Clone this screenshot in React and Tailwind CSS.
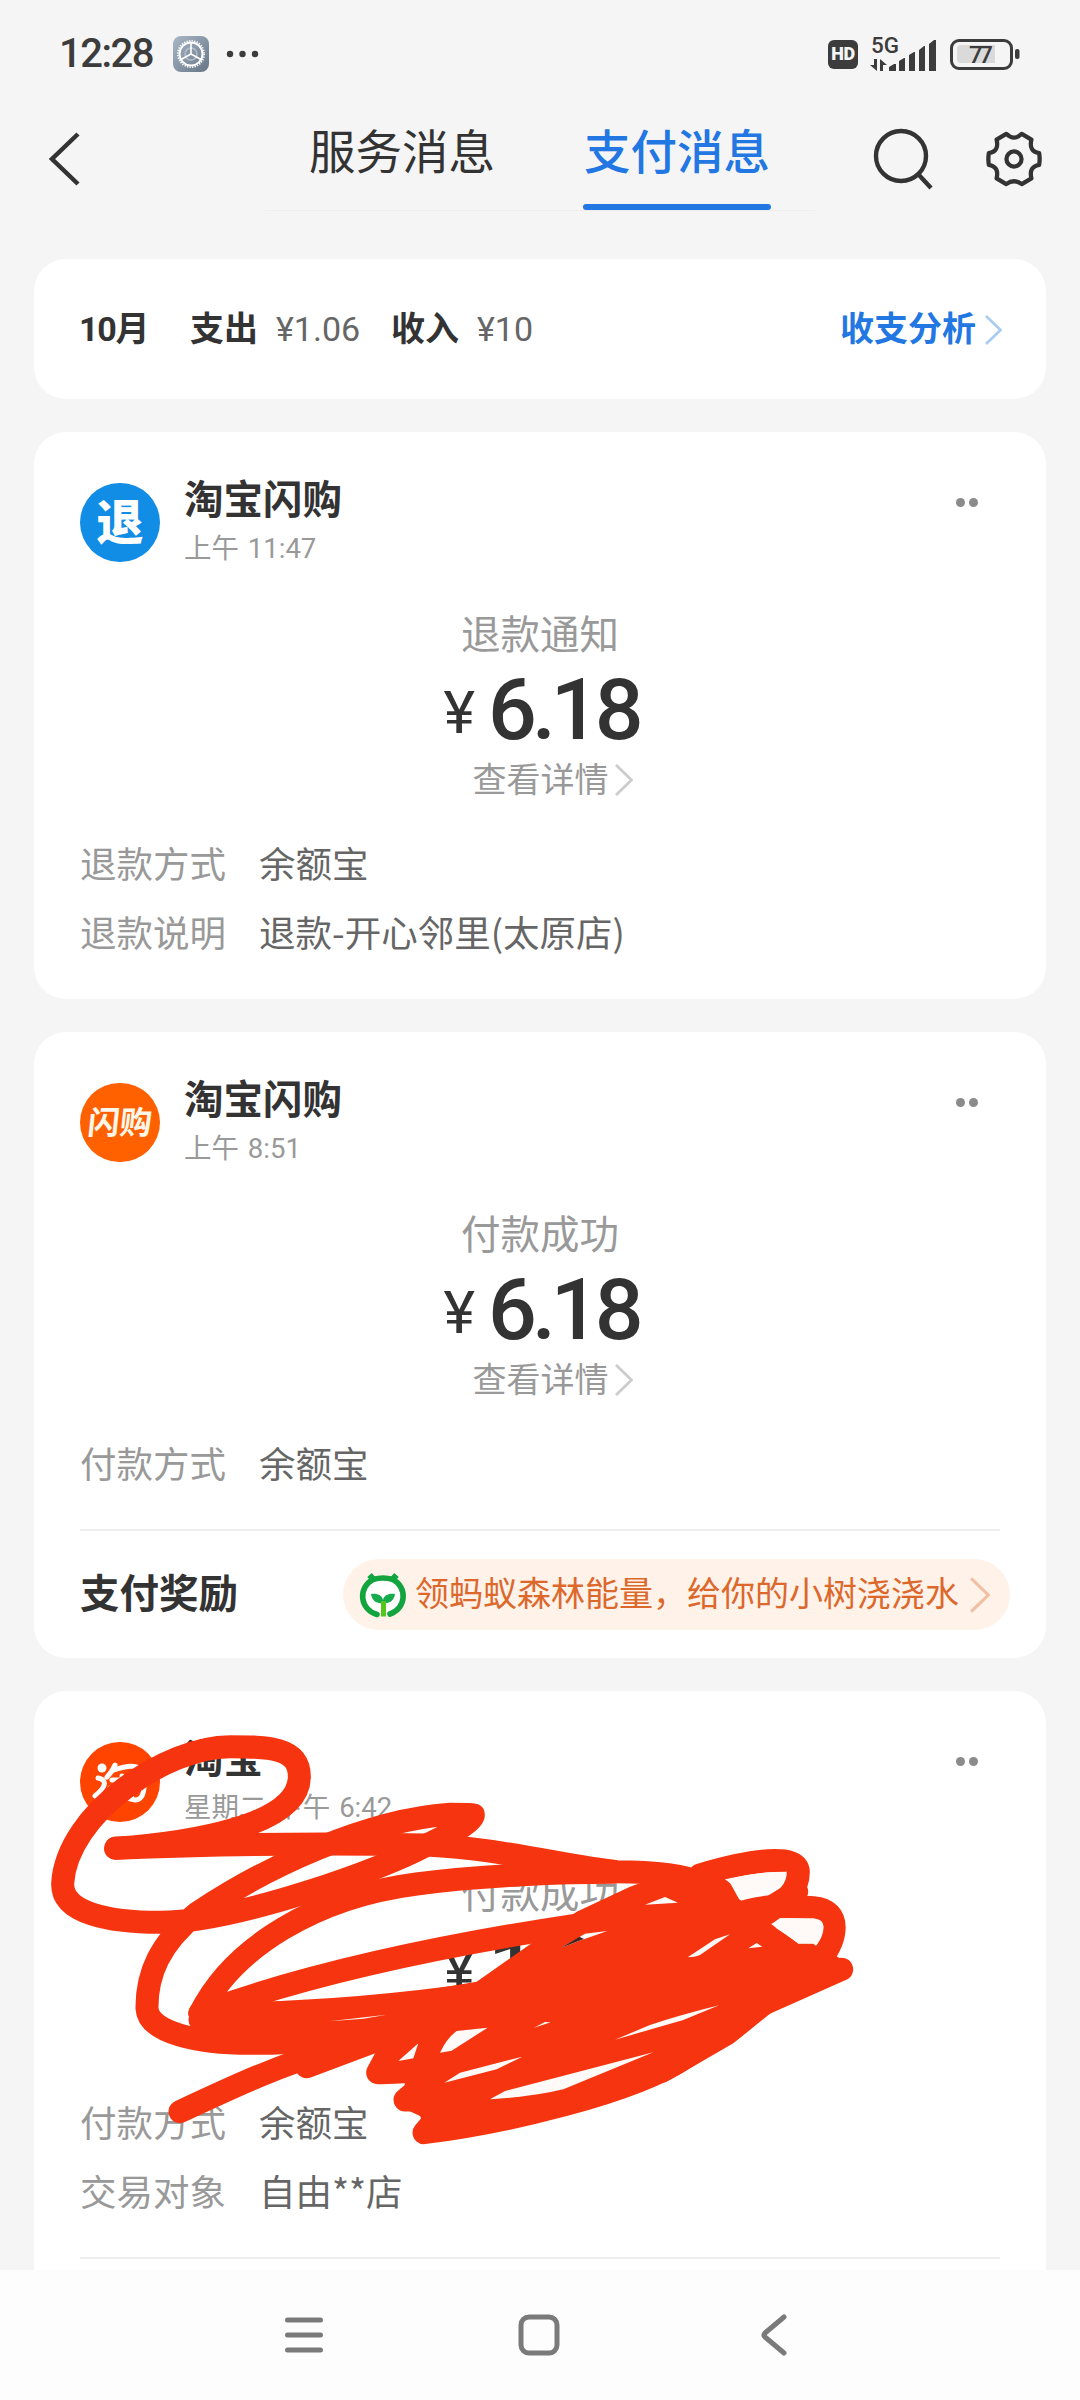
/* eslint-disable react/prop-types */

const bills = [
  {
    logo: 'refund',
    name: '淘宝闪购',
    time: '上午 11:47',
    title: '退款通知',
    amount: '6.18',
    rows: [
      ['退款方式', '余额宝'],
      ['退款说明', '退款-开心邻里(太原店)'],
    ],
  },
  {
    logo: 'flash',
    name: '淘宝闪购',
    time: '上午 8:51',
    title: '付款成功',
    amount: '6.18',
    rows: [['付款方式', '余额宝']],
    reward: '领蚂蚁森林能量，给你的小树浇浇水',
  },
  {
    logo: 'taobao',
    name: '淘宝',
    time: '星期二 下午 6:42',
    title: '付款成功',
    amount: '1.06',
    rows: [
      ['付款方式', '余额宝'],
      ['交易对象', '自由**店'],
    ],
    divider: true,
  },
];

const Chevron = ({ className }) => (
  <svg viewBox="0 0 18 32" className={className} fill="none" stroke="currentColor" strokeWidth="2.800">
    <path d="M1 1 16.500 16 1 31" />
  </svg>
);

const StatusBar = () => (
  <div className="flex h-[106px] items-center pt-0.5 pr-[60px] pl-[59px] text-[#3c3c3c]">
    <div className="w-[114px] text-[40px] leading-[40px] font-medium tracking-[-1.5px]">12:28</div>
    <svg viewBox="0 0 36 36" className="h-9 w-9" fill="none">
      <defs>
        <linearGradient id="app" x1="0" y1="0" x2="1" y2="1">
          <stop offset="0" stopColor="#a9b7c6" />
          <stop offset="1" stopColor="#667586" />
        </linearGradient>
      </defs>
      <rect width="36" height="36" rx="8" fill="url(#app)" />
      <circle cx="18" cy="18" r="6" stroke="#b4bfca" strokeWidth="1.500" />
      <circle cx="18" cy="18" r="11.500" stroke="#fff" strokeWidth="2" />
      <circle cx="18" cy="18" r="13.200" stroke="#fff" strokeWidth="1.600" strokeDasharray="1.300 1.300" />
      <path d="M18 18V7M18 18l-10 5.500M18 18l10 5.500" stroke="#fff" strokeWidth="1.600" />
    </svg>
    <svg viewBox="0 0 34 8" className="ml-[17px] h-2 w-[34px]" fill="currentColor">
      <circle cx="4" cy="4" r="3.200" />
      <circle cx="16.500" cy="4" r="3.200" />
      <circle cx="29" cy="4" r="3.200" />
    </svg>
    <div className="ml-auto flex items-center">
      <div className="flex h-[29px] w-[30px] items-center justify-center rounded-[6px] bg-[#3c3c3c] text-[18px] leading-none font-black tracking-[-0.5px] text-[#f5f5f5]">
        HD
      </div>
      <svg viewBox="-1 -10 70 44" className="-mt-2.5 ml-[11px] h-11 w-[70px]" fill="currentColor">
        <text x="1" y="16" fontSize="22" fontWeight="500" textLength="28" lengthAdjust="spacingAndGlyphs">5G</text>
        <path d="M4 22h3v12L0 28h4zM10 34V22l7 6h-4v6z" />
        <path d="M19 34v-4l5-3h2v7zM29 34V24l5-3h1v13zM39 34V18l5-3h1v19zM49 34V13l5-4h1v25zM59 34V7l5-4h2v31z" />
      </svg>
      <svg viewBox="0 0 70 32" className="ml-[11px] h-8 w-[70px]" fill="none">
        <rect x="1.500" y="2.500" width="60" height="28" rx="7.500" stroke="#3c3c3c" strokeWidth="3" />
        <path d="M11 7h34v18H11a4 4 0 0 1-4-4V11a4 4 0 0 1 4-4z" fill="#dadada" />
        <rect x="65" y="11" width="4.500" height="10" rx="2" fill="#3c3c3c" />
        <text x="19" y="25" fontSize="24" fontWeight="500" fill="#3c3c3c" textLength="24">77</text>
      </svg>
    </div>
  </div>
);

const Header = () => (
  <div className="flex h-[153px] text-[#333]">
    <svg viewBox="0 0 32 54" className="mt-[26px] ml-12 h-[54px] w-8" fill="none" stroke="currentColor" strokeWidth="4.500">
      <path d="M30 2 4 27 30 52" />
    </svg>
    <div className="ml-[185px] flex h-[105px] w-[550px] border-b border-[#ededed] text-[46.500px] leading-[60px]">
      <div className="ml-[44px] h-[105px] w-[190px] pt-[17px]">服务消息</div>
      <div className="ml-[84px] flex h-[104px] w-[188px] flex-col justify-between pt-[17px] text-[#2277e3]">
        <span className="pl-px font-medium whitespace-nowrap">支付消息</span>
        <span className="h-1.5 rounded-full bg-[#2277e3]" />
      </div>
    </div>
    <svg viewBox="0 0 60 62" className="mt-[22px] ml-[58px] h-[62px] w-[60px]" fill="none" stroke="currentColor" strokeWidth="4.400">
      <circle cx="28" cy="28" r="25" />
      <path d="M45.500 46.500 58 60" />
    </svg>
    <svg viewBox="-31 -31 62 62" className="mt-[23px] ml-[51px] h-[60px] w-[60px]" fill="none" stroke="currentColor" strokeWidth="4.400" strokeLinejoin="round">
      <path d="M-8-26Q0-18 8-26L18-20Q15-8 26-6Q27 0 26 6Q15 8 18 20L8 26Q0 20 -8 26L-18 20Q-15 8 -26 6Q-27 0 -26-6Q-15-8 -18-20Z" />
      <circle r="7.800" />
    </svg>
  </div>
);

const Summary = () => (
  <div className="flex h-[140px] items-center rounded-[32px] bg-white pt-px pr-11 pl-[45px] text-[34px] text-[#333]">
    <span className="w-[111px] font-bold tracking-[-1.200px]">10月</span>
    <span className="w-[86px] font-bold">支出</span>
    <span className="w-[115px] text-[#666]">¥1.06</span>
    <span className="w-[86px] font-bold">收入</span>
    <span className="text-[#666]">¥10</span>
    <span className="ml-auto font-bold text-[#2277e3]">收支分析</span>
    <Chevron className="ml-[9px] h-[30px] w-[17px] text-[#a9ccf3]" />
  </div>
);

const Logo = ({ type }) => {
  if (type === 'refund') {
    return (
      <div className="flex h-[79px] w-20 items-center justify-center rounded-full bg-[#128de6] text-[47px] leading-none font-black text-white">
        退
      </div>
    );
  }
  if (type === 'flash') {
    return (
      <div className="flex h-[79px] w-20 items-center justify-center rounded-full bg-[#ff6000] text-[32px] leading-none font-bold text-[#fff6ea]">
        <span className="-skew-x-6">闪购</span>
      </div>
    );
  }
  return (
    <svg viewBox="0 0 80 80" className="h-20 w-20" fill="none" stroke="#fff" strokeWidth="5" strokeLinecap="round">
      <circle cx="40" cy="40" r="40" fill="#ff4400" stroke="none" />
      <circle cx="22" cy="26" r="4.500" fill="#fff" stroke="none" />
      <path d="M18 36c9 2 9 8-3 18M35 23c-2 5-5 9-8 12M34 28c22-8 34-4 30 18-1 10-5 14-14 11M32 38h20M30 46h24M42 34v20M33 50v6h19" />
    </svg>
  );
};

const ForestIcon = () => (
  <svg viewBox="0 0 48 48" className="h-12 w-12" fill="none">
    <circle cx="24" cy="25" r="20" fill="#fff" />
    <path d="M18 43.500A19.800 19 0 0 1 14 8.500Q24 5.500 34 8.500A19.800 19 0 0 1 31 43" stroke="#12a53f" strokeWidth="5.600" strokeLinecap="round" />
    <path d="M15 9 10.500 4M33 9l4.500-5" stroke="#12a53f" strokeWidth="6" />
    <path d="M24 32c-6 1-11-2-12-9 6-1 11 1 12 6 1-5 6-7 12-6-1 7-6 10-12 9z" fill="#16ab4c" />
    <path d="M24.500 30v15.500" stroke="#56c61c" strokeWidth="5" />
  </svg>
);

const BillCard = ({ bill, last }) => (
  <div className={last ? 'h-[579px] overflow-hidden rounded-t-[32px] bg-white px-[46px]' : 'rounded-[32px] bg-white px-[46px]'}>
    <div className="flex h-[137px] pt-[51px]">
      <Logo type={bill.logo} />
      <div className="-mt-[11px] ml-6">
        <div className="text-[39.500px] leading-[58px] font-bold text-[#333]">{bill.name}</div>
        <div className="text-[27.500px] leading-[38px] text-[#999] [word-spacing:2px]">{bill.time}</div>
      </div>
      <div className="mt-[15px] mr-[22px] ml-auto flex gap-1">
        <span className="h-[9px] w-[9px] rounded-full bg-[#8b8b8b]" />
        <span className="h-[9px] w-[9px] rounded-full bg-[#8b8b8b]" />
      </div>
    </div>

    {/* Amount */}
    <div className="mt-[38px] flex flex-col items-center">
      <div className="text-[39.500px] leading-[58px] text-[#999]">{bill.title}</div>
      <div className="flex h-[90px] items-center text-[#333]">
        <span className="mt-1.5 mr-[14px] text-[60px] leading-none tracking-[-1px]">¥</span>
        <span className="-mr-0.5 text-[86px] leading-none font-medium tracking-[-5px]">{bill.amount}</span>
      </div>
      <div className="ml-[25px] flex h-[50px] items-center text-[34px] text-[#999]">
        查看详情
        <Chevron className="ml-1.5 h-8 w-[18px] text-[#ccc]" />
      </div>
    </div>

    {/* Details */}
    <div className="mt-[23px] font-['Noto_Sans_CJK_SC',sans-serif] text-[36.500px] leading-[69px]">
      {bill.rows.map(([label, value]) => (
        <div key={label} className="flex">
          <span className="w-[179px] text-[#999]">{label}</span>
          <span className="text-[#666]">{value}</span>
        </div>
      ))}
    </div>

    {bill.divider && <div className="mt-8 h-0.5 bg-[#eee]" />}
    {bill.reward && (
      <div className="mt-8 flex h-[129px] items-center border-t-2 border-[#eee]">
        <span className="text-[39.500px] font-bold text-[#333]">支付奖励</span>
        <div className="-mr-2.5 ml-auto flex h-[71px] w-[667px] items-center rounded-full bg-[#fff2e9] pl-4 text-[34px] whitespace-nowrap text-[#dc682c]">
          <ForestIcon />
          <span className="ml-2">{bill.reward}</span>
          <Chevron className="ml-[11px] h-9 w-5 text-[#f3bfa2]" />
        </div>
      </div>
    )}
    {!bill.divider && !bill.reward && <div className="h-[33px]" />}
  </div>
);

// Hand drawn marker that hides the last bill
const Scribble = () => (
  <svg viewBox="0 0 2700 1500" className="pointer-events-none absolute top-[1680px] left-0 h-[500px] w-[900px]" fill="none">
    <g stroke="#f63510" strokeWidth="69" strokeLinecap="round" strokeLinejoin="round">
      <path d="M347 505C560 490 898 440 898 290C898 200 800 200 690 200C500 200 200 400 188 610C185 700 330 727 480 727C700 727 1150 570 1290 490Q1420 430 1420 405Q1420 403 1350 403C1100 420 800 560 590 700C480 790 440 880 441 985C445 1060 600 1090 750 1090C1100 1090 1300 1020 1500 960" />
      <path d="M347 505C700 490 1000 490 1280 495C1500 505 1700 560 1850 575C2050 575 2180 610 2180 690" />
      <path d="M600 1000C700 800 950 650 1250 612C1450 585 1700 577 1840 577" />
      <path d="M600 1000C900 890 1300 800 1730 735" />
      <path d="M600 1000C900 1005 1200 975 1450 940" />
      <path d="M600 1020C900 1040 1200 1040 1450 1000" />
      <path d="M2100 585C2250 540 2395 520 2395 575C2395 630 2360 660 2300 700" />
      <path d="M2200 705C2300 670 2350 680 2440 683C2530 690 2510 780 2460 840" />
      <path d="M2390 635 2300 690M2525 868 2250 990" />
      <path d="M540 1295C700 1220 850 1150 1000 1110L1250 1020M920 1160 1160 1070" />
      <path d="M1180 1090 1133 1178Q1300 1180 1450 1120" />
      <path d="M1300 1190 1215 1260Q1350 1260 1500 1220" />
      <path d="M1330 1290 1272 1358C1500 1330 1900 1240 2060 1130C2150 1080 2230 1010 2300 960" />
    </g>
    <path d="M1430 905 1730 695 1890 620 2055 560 2180 590 2217 657 2328 743 2395 790 2440 790 2520 835 2545 890 2330 985 2200 1090 2000 1205 1700 1300 1500 1345 1290 1375 1260 1308 1200 1280 1215 1210 1140 1190 1125 1100 880 1100 600 1040 1100 960Z" fill="#f63510" />
    <g fill="#fffaf7">
      <path d="M1195 1143 1255 1090 1240 1135Z" />
      <path d="M1320 1118Q1340 1075 1370 1053L1463 1043 1355 1112Z" />
      <path d="M1333 1208 1380 1178 1567 1130 1490 1168Z" />
      <path d="M1470 1258 1515 1233 1960 1117 1690 1228Q1600 1250 1470 1258Z" />
      <path d="M1845 1079 1950 1035Q2040 1005 2157 976L2050 1020Z" />
      <path d="M2063 832 2145 778 2190 763 2100 825Q2085 832 2063 832Z" />
      <path d="M2175 598Q2270 575 2361 575L2340 618Q2280 630 2220 657Q2215 625 2175 598Z" />
      <path d="M2327 743 2355 715 2440 715Q2470 718 2471 740Q2470 770 2448 797L2440 791 2395 791Q2360 762 2327 743Z" />
      <path d="M2245 805 2270 789 2287 800Z" />
      <path d="M1935 674 1995 651 2034 668Z" />
      <path d="M1683 803 1755 761 1822 753 1745 780Z" />
      <path d="M1602 1043 1635 1026 1652 1027Z" />
      <path d="M988 1024 1160 1004 1090 1016Z" />
    </g>
    <path d="M1683 803 1738 770 1752 777Z" fill="#4a2320" />
  </svg>
);

const NavBar = () => (
  <div className="flex h-[130px] items-center bg-[#fdfdfd] text-[#7a7a7a]">
    <svg viewBox="0 0 40 40" className="ml-[284px] h-10 w-10" stroke="currentColor" strokeWidth="5" strokeLinecap="round">
      <path d="M3.500 5h33M3.500 20h33M3.500 35h33" />
    </svg>
    <svg viewBox="0 0 44 44" className="ml-[193px] h-11 w-11" fill="none" stroke="currentColor" strokeWidth="5">
      <rect x="4" y="4" width="36" height="36" rx="8" />
    </svg>
    <svg viewBox="0 0 30 44" className="ml-[198px] h-11 w-[30px]" fill="none" stroke="currentColor" strokeWidth="5" strokeLinecap="round" strokeLinejoin="round">
      <path d="M25 4 6 20Q4 22 6 24L25 40" />
    </svg>
  </div>
);

const App = () => {
  return (
    <div className="relative h-[2400px] w-[1080px] overflow-hidden bg-[#f5f5f5] font-[Roboto,'Noto_Sans_CJK_SC',sans-serif]">
      <StatusBar />
      <Header />
      <div className="flex h-[2011px] flex-col gap-[33px] px-[34px]">
        <Summary />
        {bills.map((bill, i) => (
          <BillCard key={i} bill={bill} last={i === bills.length - 1} />
        ))}
      </div>
      <NavBar />
      <Scribble />
    </div>
  );
};

export default App;
